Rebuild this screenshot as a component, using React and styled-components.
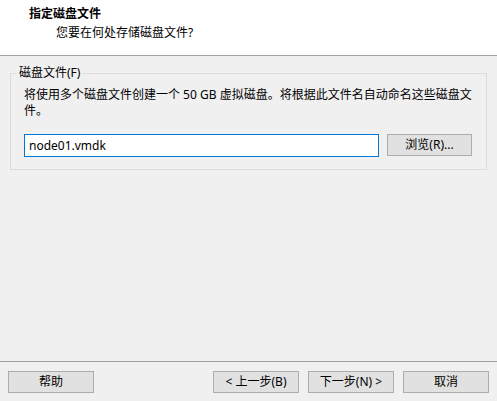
import styled, { createGlobalStyle } from "styled-components"

const Global = createGlobalStyle`
    html, body {
        margin: 0;
        padding: 0;
        background: #f0f0f0;
    }
    body {
        font-family: "Noto Sans", "Noto Sans CJK SC", sans-serif;
        font-size: 12px;
        color: #000;
    }
`

const Janela = styled.div`
    width: 497px;
    height: 401px;
    display: flex;
    flex-direction: column;
    background: #f0f0f0;
`

const Cabeca = styled.header`
    height: 56px;
    box-sizing: border-box;
    background: #ffffff;
    border-bottom: 1px solid #a0a0a0;
    padding: 6px 0 0 29px;
    line-height: 16px;
    flex-shrink: 0;
    h1 {
        margin: 0;
        font-size: 12px;
        font-weight: bold;
    }
    p {
        margin: 3px 0 0 27px;
    }
`

const Corpo = styled.main`
    flex: 1;
    padding: 9px 10px 0 10px;
`

const Grupo = styled.fieldset`
    margin: 0;
    border: 1px solid #dcdcdc;
    padding: 0 14px 12px 6px;
    legend {
        padding: 0 2px;
        line-height: 16px;
    }
`

const Dentro = styled.div`
    padding-left: 7px;
`

const Texto = styled.p`
    margin: 6px 0 0 0;
    line-height: 16px;
    max-width: 448px;
`

const Linha = styled.div`
    display: flex;
    gap: 8px;
    margin-top: 15px;
    align-items: flex-start;
`

const Campo = styled.input`
    width: 355px;
    height: 23px;
    box-sizing: border-box;
    border: 1px solid #0078d7;
    background: #fff;
    font: inherit;
    padding: 0 4px;
    outline: none;
`

const Botao = styled.button`
    width: ${p => p.$largura || 86}px;
    height: 22px;
    box-sizing: border-box;
    background: #e1e1e1;
    border: 1px solid #adadad;
    font: inherit;
    color: #000;
    padding: 0;
    line-height: 18px;
`

const Rodape = styled.footer`
    border-top: 1px solid #a0a0a0;
    padding: 9px 8px 8px 8px;
    display: flex;
    gap: 9px;
    flex-shrink: 0;
`

const Espaco = styled.div`
    flex: 1;
`

export default function App() {
    return (
        <Janela>
            <Global />
            <Cabeca>
                <h1>指定磁盘文件</h1>
                <p>您要在何处存储磁盘文件?</p>
            </Cabeca>
            <Corpo>
                <Grupo>
                    <legend>磁盘文件(F)</legend>
                    <Dentro>
                        <Texto>将使用多个磁盘文件创建一个 50 GB 虚拟磁盘。将根据此文件名自动命名这些磁盘文件。</Texto>
                        <Linha>
                            <Campo defaultValue="node01.vmdk" />
                            <Botao $largura={85}>浏览(R)...</Botao>
                        </Linha>
                    </Dentro>
                </Grupo>
            </Corpo>
            <Rodape>
                <Botao>帮助</Botao>
                <Espaco />
                <Botao>&lt; 上一步(B)</Botao>
                <Botao>下一步(N) &gt;</Botao>
                <Botao>取消</Botao>
            </Rodape>
        </Janela>
    )
}
